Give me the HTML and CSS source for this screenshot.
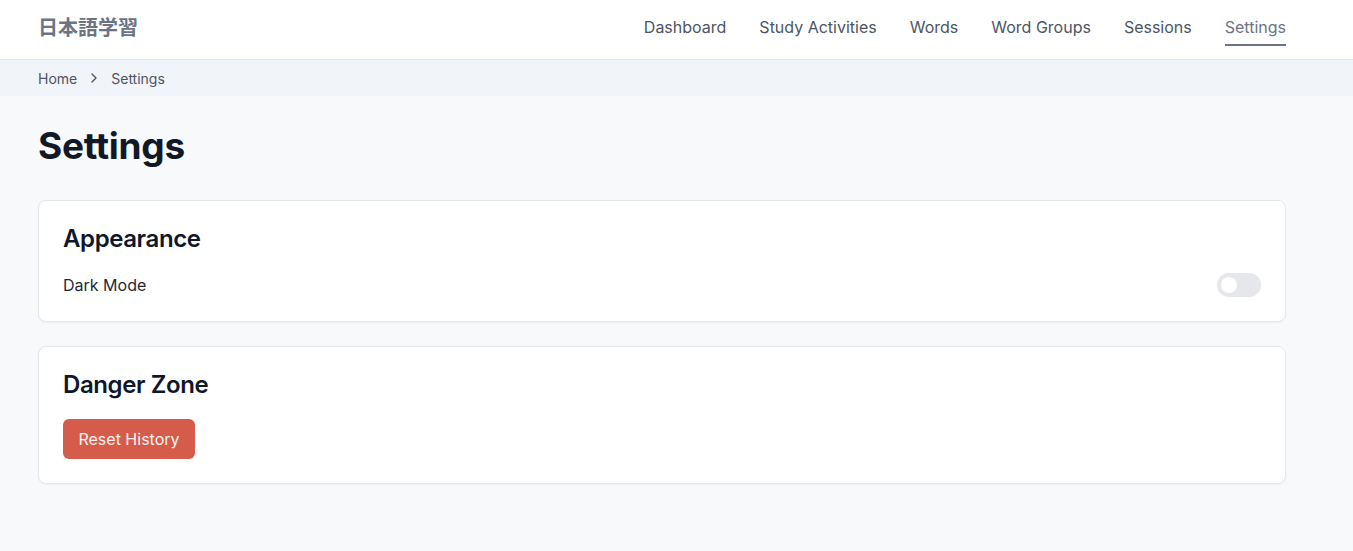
FILE: index.html
```html
<!DOCTYPE html>
<html lang="en">
<head>
<meta charset="utf-8">
<title>Settings</title>
<link rel="stylesheet" href="styles.css">
</head>
<body>
<header class="topbar">
  <div class="logo">日本語学習</div>
  <nav class="nav">
    <a class="nav-link">Dashboard</a>
    <a class="nav-link">Study Activities</a>
    <a class="nav-link">Words</a>
    <a class="nav-link">Word Groups</a>
    <a class="nav-link">Sessions</a>
    <a class="nav-link active">Settings</a>
  </nav>
</header>
<div class="crumbs">
  <span class="crumb">Home</span>
  <svg class="chev" width="16" height="16" viewBox="0 0 24 24" fill="none" stroke="currentColor" stroke-width="2" stroke-linecap="round" stroke-linejoin="round"><path d="M9 18l6-6-6-6"/></svg>
  <span class="crumb">Settings</span>
</div>
<main class="main">
  <h1 class="title">Settings</h1>
  <section class="card">
    <h2 class="card-title">Appearance</h2>
    <div class="row">
      <span class="label">Dark Mode</span>
      <span class="toggle"><span class="knob"></span></span>
    </div>
  </section>
  <section class="card">
    <h2 class="card-title">Danger Zone</h2>
    <button class="danger-btn">Reset History</button>
  </section>
</main>
</body>
</html>
```
FILE: styles.css
```css
* { box-sizing: border-box; }
html, body { margin: 0; padding: 0; }
body {
  font-family: Inter, "Noto Sans", sans-serif;
  background: #f8f9fb;
  color: #111827;
  height: 551px;
  overflow: hidden;
}
.topbar {
  height: 60px;
  background: #fff;
  border-bottom: 1px solid #e5e7eb;
  display: flex;
  align-items: flex-start;
  justify-content: space-between;
  padding: 15px 67px 0 38px;
}
.logo {
  font-family: "Noto Sans CJK JP", sans-serif;
  font-weight: 700;
  font-size: 20px;
  line-height: 24px;
  color: #6b7385;
}
.nav { display: flex; gap: 33px; }
.nav-link {
  font-size: 16px;
  line-height: 24px;
  color: #4b5563;
  position: relative;
}
.nav-link.active { color: #6b7385; }
.nav-link.active::after {
  content: "";
  position: absolute;
  left: 0; right: 0;
  bottom: -7px;
  height: 2px;
  background: #6b7385;
}
.crumbs {
  height: 36px;
  background: #f1f4f8;
  display: flex;
  align-items: center;
  gap: 9px;
  padding-left: 38px;
  font-size: 14px;
  color: #4b5563;
}
.chev { color: #4b5563; }
.main { padding: 30px 67px 0 38px; }
.title {
  font-size: 37px;
  font-weight: 700;
  margin: 0 0 34px;
  line-height: 40px;
  color: #111827;
  letter-spacing: -0.3px;
}
.card {
  background: #fff;
  border: 1px solid #e5e7eb;
  border-radius: 8px;
  box-shadow: 0 1px 2px rgba(0,0,0,0.04);
  padding: 22px 24px 24px;
  margin-bottom: 24px;
}
.card-title {
  margin: 0 0 18px;
  font-size: 24px;
  font-weight: 600;
  line-height: 32px;
  letter-spacing: -0.4px;
  color: #0f172a;
}
.row { display: flex; align-items: center; justify-content: space-between; }
.label { font-size: 16px; color: #1f2937; }
.toggle {
  width: 44px; height: 24px;
  background: #e5e7eb;
  border-radius: 12px;
  display: flex;
  align-items: center;
  padding: 0 4px;
}
.knob { width: 16px; height: 16px; border-radius: 50%; background: #fff; }
.danger-btn {
  font-family: inherit;
  font-size: 16px;
  color: #fdf2f0;
  background: #d55c4b;
  border: none;
  border-radius: 6px;
  width: 132px;
  height: 40px;
}
```
